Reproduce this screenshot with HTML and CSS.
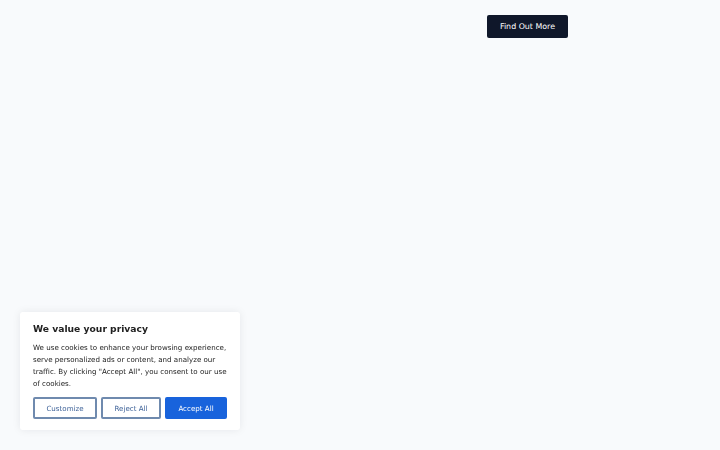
FILE: index.html
```html
<!DOCTYPE html>
<html lang="en">
<head>
<meta charset="utf-8">
<title>Privacy</title>
<link rel="stylesheet" href="styles.css">
</head>
<body>
<header class="top">
  <a class="cta" href="#">Find Out More</a>
</header>
<div class="consent" role="dialog" aria-label="We value your privacy">
  <p class="consent-title">We value your privacy</p>
  <p class="consent-text">We use cookies to enhance your browsing experience, serve personalized ads or content, and analyze our traffic. By clicking "Accept All", you consent to our use of cookies.</p>
  <div class="consent-actions">
    <button class="btn btn-outline btn-customize">Customize</button>
    <button class="btn btn-outline btn-reject">Reject All</button>
    <button class="btn btn-solid btn-accept">Accept All</button>
  </div>
</div>
</body>
</html>
```
FILE: styles.css
```css
html, body {
  margin: 0;
  padding: 0;
  height: 100%;
}
body {
  background: #f8fafc;
  font-family: "DejaVu Sans", "Noto Sans", sans-serif;
  color: #212121;
}
.top {
  display: flex;
  padding: 15px 0 0 487px;
}
.cta {
  display: flex;
  align-items: center;
  justify-content: center;
  width: 81px;
  height: 23px;
  background: #0f172a;
  color: #ffffff;
  font-size: 7.9px;
  text-decoration: none;
  border-radius: 2px;
}
.consent {
  position: fixed;
  left: 20px;
  bottom: 20px;
  width: 220px;
  box-sizing: border-box;
  padding: 10px 13px 11px 13px;
  background: #ffffff;
  border-radius: 3px;
  box-shadow: 0 0 8px rgba(15, 23, 42, 0.08);
}
.consent-title {
  margin: 0 0 6px 0;
  font-size: 9.2px;
  font-weight: bold;
  line-height: 14px;
  color: #212121;
}
.consent-text {
  margin: 0 0 7px 0;
  font-size: 7.1px;
  line-height: 12px;
  color: #212121;
}
.consent-actions {
  display: flex;
  gap: 4px;
}
.btn {
  height: 22px;
  box-sizing: border-box;
  font-family: inherit;
  font-size: 7.1px;
  border-radius: 2px;
  padding: 0;
  cursor: pointer;
}
.btn-outline {
  background: #ffffff;
  border: 2px solid #6f8aae;
  color: #3f6399;
}
.btn-customize { width: 64px; }
.btn-reject { width: 60px; }
.btn-solid {
  width: 62px;
  background: #1863dc;
  border: 2px solid #1863dc;
  color: #ffffff;
}
```
